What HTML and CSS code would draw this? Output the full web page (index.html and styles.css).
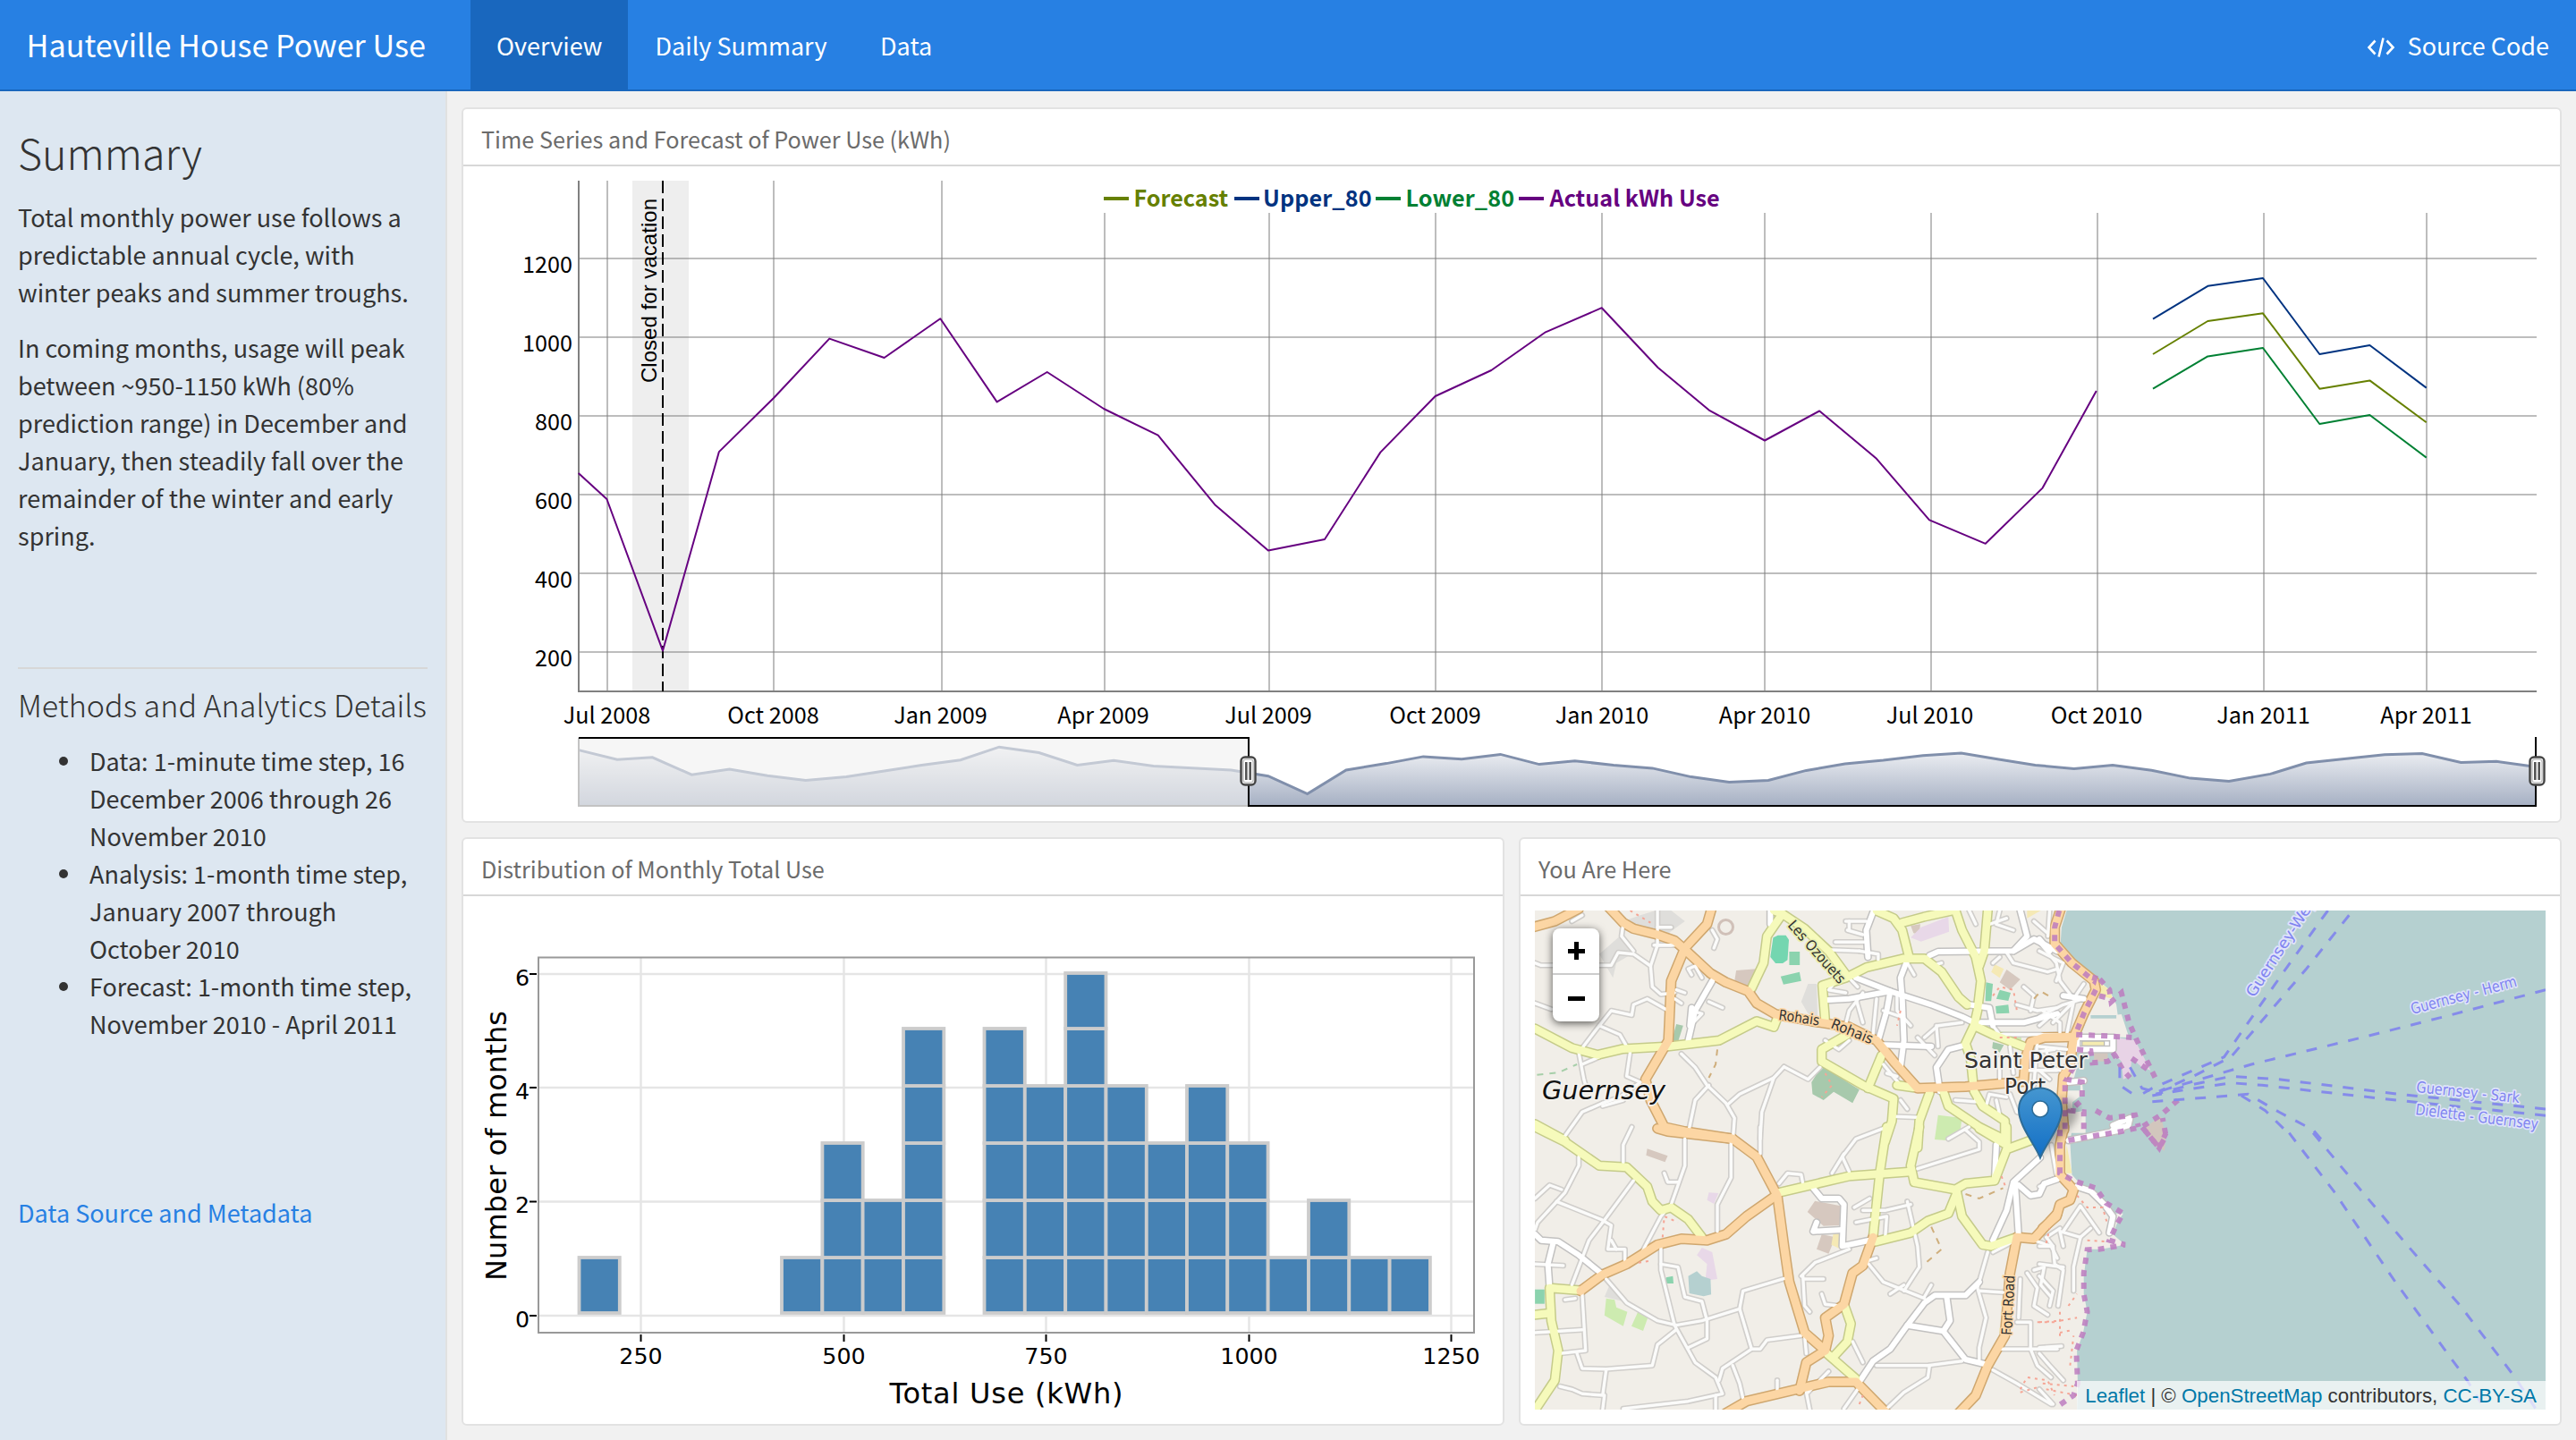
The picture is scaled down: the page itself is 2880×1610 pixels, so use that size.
FILE: index.html
```html
<!DOCTYPE html>
<html lang="en">
<head>
<meta charset="utf-8">
<title>Hauteville House Power Use</title>
<link rel="stylesheet" href="styles.css">
</head>
<body>
<header class="navbar">
  <div class="brand">Hauteville House Power Use</div>
  <nav class="tabs">
    <a class="tab active">Overview</a>
    <a class="tab">Daily Summary</a>
    <a class="tab">Data</a>
  </nav>
  <a class="source">
    <svg width="32" height="24" viewBox="0 0 32 24" fill="none" stroke="#fff" stroke-width="2.6"><path d="M9.5 4.5 2.5 12l7 7.5M22.5 4.5l7 7.5-7 7.5M18.5 1.5l-5 21"/></svg>
    <span>Source Code</span>
  </a>
</header>
<main class="page">
  <aside class="sidebar">
    <h2>Summary</h2>
    <p>Total monthly power use follows a<br>predictable annual cycle, with<br>winter peaks and summer troughs.</p>
    <p>In coming months, usage will peak<br>between ~950-1150 kWh (80%<br>prediction range) in December and<br>January, then steadily fall over the<br>remainder of the winter and early<br>spring.</p>
    <hr>
    <h3>Methods and Analytics Details</h3>
    <ul>
      <li>Data: 1-minute time step, 16<br>December 2006 through 26<br>November 2010</li>
      <li>Analysis: 1-month time step,<br>January 2007 through<br>October 2010</li>
      <li>Forecast: 1-month time step,<br>November 2010 - April 2011</li>
    </ul>
    <a class="meta">Data Source and Metadata</a>
  </aside>
  <section class="content">
    <article class="panel wide">
      <h4>Time Series and Forecast of Power Use (kWh)</h4>
      <svg class="plot" viewBox="518 186 2344 732">
        <defs>
          <linearGradient id="area" x1="0" y1="824" x2="0" y2="900" gradientUnits="userSpaceOnUse"><stop offset="0" stop-color="#fff"/><stop offset="1" stop-color="#a7b1c4"/></linearGradient>
          <g id="grip">
            <rect x="-8" y="-15.5" width="16" height="31" rx="4.5" fill="#fff" stroke="#444" stroke-width="2.4"/>
            <rect x="-5.6" y="-13" width="11.2" height="26" rx="3" fill="none" stroke="#c4c4c4" stroke-width="1.6"/>
            <path d="M-2.2-10v20M2.2-10v20" stroke="#555" stroke-width="2.6"/>
          </g>
        </defs>
        <rect x="707" y="202" width="63" height="571" fill="#eee"/>
        <path class="grid" d="M647 289H2836M647 377H2836M647 465H2836M647 553H2836M647 641H2836M647 729H2836"/>
        <path class="grid" d="M679 202V773M865 202V773M1053 202V773M1235 238V773M1419 238V773M1605 238V773M1791 238V773M1973 238V773M2159 238V773M2345 238V773M2531 238V773M2713 238V773"/>
        <path d="M647 202V773H2836" fill="none" stroke="#808080" stroke-width="2"/>
        <path d="M741 202V773" stroke="#000" stroke-width="2" stroke-dasharray="14 6"/>
        <g class="series">
          <polyline stroke="#660080" points="646.7,528.9 678.4,558 741,727.6 803.9,505.1 865,445 927.3,378.6 988.6,400 1051.3,356.3 1114.6,449.4 1170.7,416 1234,457 1294.7,486.7 1358.2,564.2 1417.9,615.6 1481,603 1543.4,505.6 1604.6,443 1667.3,414 1728,371.3 1790.8,344.2 1853.6,411 1910.7,458.6 1973,492.5 2034.2,459.5 2097.3,512.2 2157,581.4 2219.8,607.8 2283.6,545.6 2343.8,437.1"/>
          <polyline stroke="#003380" points="2407,356.7 2468.3,319.8 2530,311 2593.3,396 2649.4,386 2712.7,433.6"/>
          <polyline stroke="#668000" points="2407,396 2468.3,359 2530,350.3 2593.3,434.7 2649.4,425.4 2712.7,472.3"/>
          <polyline stroke="#008033" points="2407,434.7 2468.3,398.4 2530,389 2593.3,474 2649.4,464 2712.7,511.6"/>
        </g>
        <text class="note" transform="translate(733.5 428) rotate(-90)" textLength="206">Closed for vacation</text>
        <g class="legend">
          <g fill="#668000"><rect x="1234" y="220" width="28" height="4"/><text x="1267.500" y="230.500">Forecast</text></g>
          <g fill="#003380"><rect x="1380" y="220" width="28" height="4"/><text x="1412" y="230.500" textLength="121.500">Upper_80</text></g>
          <g fill="#008033"><rect x="1538" y="220" width="28" height="4"/><text x="1571.500" y="230.500" textLength="121.500">Lower_80</text></g>
          <g fill="#660080"><rect x="1698" y="220" width="28" height="4"/><text x="1732.500" y="230.500">Actual kWh Use</text></g>
        </g>
        <g class="axis end">
          <text x="640" y="304.500">1200</text><text x="640" y="392.500">1000</text><text x="640" y="480.500">800</text><text x="640" y="568.500">600</text><text x="640" y="656.500">400</text><text x="640" y="744.500">200</text>
        </g>
        <g class="axis mid">
          <text x="678.500" y="808.500">Jul 2008</text><text x="864.500" y="808.500">Oct 2008</text><text x="1051.500" y="808.500">Jan 2009</text><text x="1233.500" y="808.500">Apr 2009</text><text x="1418" y="808.500">Jul 2009</text><text x="1604.500" y="808.500">Oct 2009</text><text x="1791" y="808.500">Jan 2010</text><text x="1973" y="808.500">Apr 2010</text><text x="2157.500" y="808.500">Jul 2010</text><text x="2344" y="808.500">Oct 2010</text><text x="2530.500" y="808.500">Jan 2011</text><text x="2712.500" y="808.500">Apr 2011</text>
        </g>
        <path d="M647 838.600L690 849.200 729.400 846.800 773.300 866.200 815.600 859.900 858 867.200 900.800 872.500 946.200 868.600 988.600 861.900 1030.400 855.500 1073.800 849.700 1117.100 835.200 1161.500 841.500 1204.400 855.500 1245.200 850.200 1289.600 856.500 1376.500 860.900 1417.900 867.700 1461.700 887.500 1505 860.900 1550 853.600 1591.300 845.900 1634.200 848.800 1677.500 843.400 1720.900 854.600 1760.700 850.700 1804 855.500 1847.400 858.900 1890.800 868.600 1933.200 874.400 1977 872.500 2019.400 861.400 2062.700 854.100 2105.500 850.100 2149.900 844.800 2192.700 841.900 2234.600 848.900 2275.400 855.400 2318.800 859.500 2362 855.400 2405.500 861.300 2448.900 870.100 2492 873.600 2538.200 865.400 2578.500 853 2620.800 848.400 2666 843.700 2708 842.500 2751.400 852.500 2791 851.300 2834 857.200V900H647Z" fill="url(#area)"/>
        <path d="M647 838.600L690 849.200 729.400 846.800 773.300 866.200 815.600 859.900 858 867.200 900.800 872.500 946.200 868.600 988.600 861.900 1030.400 855.500 1073.800 849.700 1117.100 835.200 1161.500 841.500 1204.400 855.500 1245.200 850.200 1289.600 856.500 1376.500 860.900 1417.900 867.700 1461.700 887.500 1505 860.900 1550 853.600 1591.300 845.900 1634.200 848.800 1677.500 843.400 1720.900 854.600 1760.700 850.700 1804 855.500 1847.400 858.900 1890.800 868.600 1933.200 874.400 1977 872.500 2019.400 861.400 2062.700 854.100 2105.500 850.100 2149.900 844.800 2192.700 841.900 2234.600 848.900 2275.400 855.400 2318.800 859.500 2362 855.400 2405.500 861.300 2448.900 870.100 2492 873.600 2538.200 865.400 2578.500 853 2620.800 848.400 2666 843.700 2708 842.500 2751.400 852.500 2791 851.300 2834 857.200" fill="none" stroke="#808fab" stroke-width="3"/>
        <path d="M647 825V901H1396" fill="none" stroke="#808080" stroke-width="2"/>
        <rect x="646" y="824" width="750" height="78" fill="#f0f0f0" fill-opacity=".6"/>
        <path d="M647 825H1396V901H2835V824" fill="none" stroke="#000" stroke-width="2"/>
        <use href="#grip" x="1395.500" y="862"/><use href="#grip" x="2836.500" y="862"/>
      </svg>
    </article>
    <article class="panel">
      <h4>Distribution of Monthly Total Use</h4>
      <svg class="plot" viewBox="518 1002 1162 590">
        <path d="M716.500 1070V1490M943.500 1070V1490M1169.500 1070V1490M1396.500 1070V1490M1622.500 1070V1490M602 1089H1648M602 1216H1648M602 1343.500H1648M602 1471H1648" stroke="#e5e5e5" stroke-width="2.400"/>
        <g id="bars" fill="#4682b4" stroke="#ccc" stroke-width="3.800"></g>
        <rect x="602" y="1070.500" width="1046" height="419.500" fill="none" stroke="#999" stroke-width="2"/>
        <path d="M716.500 1492v8M943.500 1492v8M1169.500 1492v8M1396.500 1492v8M1622.500 1492v8M592 1089h8M592 1216h8M592 1343.500h8M592 1471h8" stroke="#000" stroke-width="2"/>
        <g class="dv mid"><text x="716.500" y="1525">250</text><text x="943.500" y="1525">500</text><text x="1169.500" y="1525">750</text><text x="1396.500" y="1525">1000</text><text x="1622.500" y="1525">1250</text></g>
        <g class="dv end"><text x="592" y="1102">6</text><text x="592" y="1229">4</text><text x="592" y="1356">2</text><text x="592" y="1484">0</text></g>
        <text class="dvt" x="994.500" y="1569" textLength="261">Total Use (kWh)</text>
        <text class="dvt" transform="translate(566 1432) rotate(-90)" textLength="302">Number of months</text>
      </svg>
    </article>
    <article class="panel">
      <h4>You Are Here</h4>
      <div class="map">
        <svg viewBox="1716 1018 1130 558">
          <defs>
            <linearGradient id="pin" x1="0" y1="0" x2="0" y2="1"><stop offset="0" stop-color="#4596d0"/><stop offset="1" stop-color="#126fc6"/></linearGradient>
            <filter id="soft"><feGaussianBlur stdDeviation="4"/></filter>
          </defs>
          <g id="tiles"></g>
          <g class="halo">
            <g fill="#333" stroke="#e9eeb0"><text transform="translate(1998 1035) rotate(48.500)" textLength="88" lengthAdjust="spacingAndGlyphs" font-size="16">Les Ozouets</text></g>
            <g fill="#333" stroke="#fcd6a4"><text transform="translate(1988 1140) rotate(8)" textLength="46" lengthAdjust="spacingAndGlyphs" font-size="16">Rohais</text><text transform="translate(2046 1149) rotate(22)" textLength="49" lengthAdjust="spacingAndGlyphs" font-size="16">Rohais</text><text transform="translate(2249 1493) rotate(-87)" textLength="67" lengthAdjust="spacingAndGlyphs" font-size="16">Fort Road</text></g>
            <g fill="#333" stroke="#f4f2ee"><text x="2196" y="1193.500" textLength="138" lengthAdjust="spacingAndGlyphs" font-size="25">Saint Peter</text><text x="2241" y="1223" textLength="46" lengthAdjust="spacingAndGlyphs" font-size="25">Port</text><text x="1724" y="1229" textLength="138" lengthAdjust="spacingAndGlyphs" font-size="28" font-style="italic" fill="#111">Guernsey</text></g>
            <g fill="#8084f0" stroke="#dfe3fa"><text transform="translate(2520 1116) rotate(-57)" textLength="146" lengthAdjust="spacingAndGlyphs" font-size="17">Guernsey-Weym</text><text transform="translate(2697 1134) rotate(-15)" textLength="122" lengthAdjust="spacingAndGlyphs" font-size="17">Guernsey - Herm</text><text transform="translate(2701 1221) rotate(6)" textLength="116" lengthAdjust="spacingAndGlyphs" font-size="17">Guernsey - Sark</text><text transform="translate(2700 1246) rotate(7)" textLength="138" lengthAdjust="spacingAndGlyphs" font-size="17">Dielette - Guernsey</text></g>
          </g>
          <path d="M2282 1292l34-33q14-16 2-27-14-10-28 8z" fill="#000" opacity=".3" filter="url(#soft)"/>
          <path d="M2281 1294.500C2275 1279 2257 1259 2257 1240.500A24 24 0 0 1 2305 1240.500C2305 1259 2287 1279 2281 1294.500Z" fill="url(#pin)" stroke="#2e6c97" stroke-width="2"/>
          <circle cx="2281" cy="1240" r="9" fill="#fff" stroke="#2e6c97" stroke-width="1.500"/>
        </svg>
        <div class="zoom"><span class="plus"></span><span class="minus"></span></div>
        <div class="credit"><a>Leaflet</a> | © <a>OpenStreetMap</a> contributors, <a>CC-BY-SA</a></div>
      </div>
    </article>
  </section>
</main>
<script src="charts.js"></script>
</body>
</html>
```
FILE: charts.js
```js
// Histogram: number of months in each 50 kWh bin
const bins = {200:1,450:1,500:3,550:2,600:5,700:5,750:4,800:6,850:4,900:3,950:4,1000:3,1050:1,1100:2,1150:1,1200:1};
const level = [1468, 1406, 1342, 1278, 1214, 1150, 1088];
let bars = '';
for (const v in bins) {
  const x = 942 + (v - 25 - 500) * 0.906;
  for (let i = 0; i < bins[v]; i++)
    bars += `<rect x="${x.toFixed(1)}" y="${level[i + 1]}" width="45.3" height="${level[i] - level[i + 1]}"/>`;
}
document.getElementById('bars').innerHTML = bars;

// Map tiles: A north-west, B south-west, C north-east, D south-east
const tile = { A: [1700, 930], B: [1700, 1260], C: [2280, 930], D: [2280, 1260] };
const convert = (t, pts) => pts.trim().split(/\s+/).map(p => {
  const [x, y] = p.split(',').map(Number);
  return (tile[t][0] + x / 2.6133).toFixed(1) + ',' + (tile[t][1] + y / 3).toFixed(1);
}).join(' ');
const parts = src => src.trim().split('\n').flatMap(l => {
  l = l.trim(); const t = l[0];
  return l.slice(1).split(';').filter(s => s.trim()).map(s => convert(t, s));
});

const coast = convert('C', '80,264 65,320 62,375 100,440 165,490 205,530 225,580 232,640 115,650 108,690 110,790 98,840 95,1000')
  + ' ' + convert('D', '90,50 95,160 130,205 180,240 220,290 245,290 228,320 215,360 250,395 180,410 140,410 130,500 130,560 140,620 128,690 110,750 112,860 110,960 1500,960')
  + ' ' + convert('C', '1500,250');

const areas = [
  ['#dfdedb', 'A 395,264 440,264 480,300 420,350 320,330 300,300 350,280;A 230,410 290,350 340,400 280,440 270,490'],
  ['#dfdedb', 'A 840,510 865,510 868,620 840,610 820,570;B 260,530 320,590 245,570'],
  ['#74d6b0', 'A 738,355 752,347 775,347 784,362 780,430 766,441 745,441 730,420'],
  ['#8bd3ae', 'A 785,402 816,402 816,447 785,447;A 760,485 815,470 820,500 768,512;A 1400,530 1432,540 1425,567 1390,560;A 1388,585 1425,580 1428,608 1390,610;A 1360,505 1380,510 1375,568 1358,568;B 42,545 70,545 70,593 42,593;B 425,505 445,500 447,525 422,525'],
  ['#a7c9ac', 'A 880,785 990,865 970,910 915,872 885,900 853,880 850,840;A 455,645 475,650 460,705 442,700;A 1380,705 1412,715 1400,740 1378,725'],
  ['#cdebb0', 'A 1220,950 1290,960 1285,1000 1245,1035 1210,1032;B 250,575 275,580 280,605 312,620 300,668 245,632;B 345,615 372,640 358,684 324,668;A 1400,670 1465,672 1462,705'],
  ['#d6c8bf', 'A 630,465 690,460 670,520 625,500;A 1420,462 1460,495 1430,530 1400,505;B 370,73 430,97 422,118 367,95;B 860,248 935,265 932,330 885,332 838,285;B 880,360 920,370 900,425 865,410;A 1140,315 1168,310 1165,345 1148,340'],
  ['#e8d8e8', 'A 1170,320 1250,285 1252,335 1170,368 1140,355;B 530,405 560,420 575,510 540,515 545,460 515,430;B 550,220 578,222 565,258 545,245'],
  ['#f5e9b5', 'A 1385,445 1412,460 1400,490 1375,470;B 915,350 935,360 932,408 908,395;A 1480,264 1520,264 1480,290'],
  ['#b5d0d0', 'B 490,500 515,484 530,500 555,510 557,562 535,568 493,558']
].map(([c, s]) => s.split(';').map(p => `<polygon fill="${c}" points="${convert(p[0], p.slice(1))}"/>`).join('')).join('');

// Piers and harbour walls that stand in the sea
const piers = [
  ['#f1eee8', '', 'C 165,550 215,590 220,612 150,612;C 140,625 240,612 262,690 120,685;C 70,820 125,830 128,880 70,930;C 80,945 135,935 135,1010 85,1010'],
  ['#b5d0d0', '', 'C 150,615 225,615 225,626 150,626;C 80,850 120,850 120,868 80,868'],
  ['#f5ebb0', '', 'C 165,495 205,530 215,560 175,550;D 80,60 95,155 70,155'],
  ['#fff', '#aaa', 'C 115,690 215,690 215,730 115,730'],
  ['#f5ebb0', '#aaa', 'C 125,702 190,702 190,718 125,718'],
  ['#e8d3e6', '', 'C 225,690 280,700 325,800 300,790 270,760 265,820 245,830 240,770 215,740'],
  ['#d2c6bd', '', 'C 310,990 355,955 370,1020 365,1070 335,1050'],
  ['#d2c6bd', '', 'C 160,735 200,735 200,770 160,770']
].map(([c, s, d]) => d.split(';').map(p => `<polygon fill="${c}" ${s && `stroke="${s}"`} points="${convert(p[0], p.slice(1))}"/>`).join('')).join('');
const ring = `<circle cx="1929.500" cy="1036.500" r="8" fill="none" stroke="#d0c0b8" stroke-width="3"/>`;

const roads = {
  minor: parts(`
A 400,264 400,380 450,380;400,380 380,450 385,520 410,545 450,540;300,310 295,350 330,400;42,440 60,448 265,448 285,405 330,410 380,450;440,605 370,560 330,580 325,615 265,600 230,650 170,740 185,830 190,850
A 230,650 290,680 320,740 310,820 350,840;42,575 90,595;180,780 230,755;390,380 440,380;400,320 440,320;150,300 180,280
A 470,745 510,790 545,850 600,910 625,960 620,1040;550,850 510,900 490,1010;770,788 740,825 705,940 700,1030;770,788 840,830 875,790;740,825 640,880 605,915
A 240,910 180,940 130,1020;240,910 290,890 350,840;300,900 240,920;560,330 575,360 565,390;550,570 590,590;500,480 490,460 510,450 530,490
A 455,530 480,540;450,560 470,575;500,600 530,610 505,640;950,300 1010,300;955,330 1000,345;920,370 1010,370;890,395 990,400;990,400 1045,410 1045,430
A 930,490 900,530 950,540;960,490 985,520;1000,540 960,600 940,690;980,560 1000,640;1100,550 1100,600 1140,650;1060,600 1110,620;1040,560 1030,680
A 1200,450 1230,440;1150,480 1130,440;1310,262 1330,310;1400,264 1390,310 1440,330;1370,310 1420,290;1500,300 1540,340;1380,440 1400,420;1420,405 1440,440 1540,470 1568,460
A 1180,690 1220,650 1290,640;1215,650 1220,720;1160,690 1210,750;1380,650 1400,680 1568,680;1470,520 1500,550 1490,600;1450,580 1510,600 1568,590
A 1270,900 1330,905 1330,880;1090,955 1160,958;1110,900 1130,930;1060,780 1110,850;1070,810 1100,820;1360,920 1370,880 1420,890;1430,880 1450,940 1500,960
A 1390,900 1400,950;1400,760 1400,830;1430,720 1440,810;1500,740 1560,730;1480,800 1568,800;1510,700 1500,850;890,700 930,730 960,700;960,300 960,330
B 170,100 170,130 130,220 50,320 42,345;330,180 240,320 200,380 150,530;105,250 235,310 265,330 255,410 305,410 305,455;42,240 85,195 120,210
B 325,0 300,60 300,120;480,40 480,130 440,260 410,300 355,420;615,50 615,170 575,260 575,350;700,0 700,90;420,155 430,185 460,185
B 250,510 310,590 400,650 455,665 530,650 640,610 650,550 780,505;410,400 410,480 450,665 510,790 570,840 590,895 490,920 300,945;410,460 460,470 480,570 530,585 545,650 545,710 490,740
B 455,680 400,730 385,800 250,812 180,810 165,760;115,760 190,750 180,560;640,610 675,745 700,745 720,715 820,700;675,745 590,810 580,850;620,800 640,860 650,910
B 115,870 150,880 180,895 240,900 250,815;245,900 240,948;42,690 180,680;820,500 860,455 960,410;830,510 885,510;825,500 830,600 845,620;1010,450 1060,520 1180,575
B 1130,250 1160,400 1165,470 1120,550;1000,280 1065,280 1140,260;980,320 1070,300 1065,380;960,150 940,100 980,40 1060,5;910,155 945,90;1160,140 1340,75 1340,50 1300,10
B 755,190 780,155 820,160 825,190;970,720 1000,790;1040,800 1190,800 1290,785;1195,800 1190,840 1120,890 1070,945;1365,420 1335,540 1360,640 1340,740 1340,790
B 1340,550 1410,555;1400,745 1568,745;1490,745 1490,655 1450,655;1460,510 1455,640;1380,815 1450,860 1550,930;1490,745 1510,800 1550,840;1480,490 1510,540 1500,600 1540,630
B 835,890 845,948;985,880 945,945;750,850 750,890;880,560 890,595 930,600;1080,560 1120,530;1180,570 1200,530;42,460 125,465;130,580 160,575;1010,450 1040,440;975,270 1020,240
B 840,890 900,820;1250,40 1310,0;570,900 570,948;280,410 265,380;830,700 835,760;1380,420 1430,390;1500,380 1550,400 1568,440;1500,480 1530,470 1520,530 1550,570
D 0,200 30,180 55,170;70,350 120,265 175,355;120,370 60,350 70,400;40,400 20,370 60,340;0,400 40,400 45,460 70,480 55,600;120,370 100,470 100,550;0,460 70,470;0,500 40,550 30,600;0,740 65,735;0,760 30,800 70,850;150,340 120,370;0,880 40,930;35,60 50,160
C 0,370 50,440 60,500 100,560 130,510;0,400 70,440 50,500;0,620 70,580 130,560;40,640 100,570 80,680;30,264 25,350;0,650 30,620;10,600 60,640 60,680;0,720 80,730;20,730 30,790 60,800;0,800 30,830;20,1000 40,900`),
  white: parts(`
A 890,565 960,560 1080,535 1200,580 1290,620 1325,640;1195,415 1220,402 1440,400 1500,360 1568,400;560,500 510,600 490,700;980,490 1080,535 1070,600 1045,700;1440,400 1480,350 1460,264
A 1345,640 1470,640 1568,610;1130,430 1110,490 1115,560 1120,700 1110,790;1060,715 1200,720;1225,870 1215,790 1250,730 1300,715;1380,650 1370,590 1310,580;1015,420 1010,330 1030,270;730,264 730,310;500,590 495,650
B 42,360 60,380 110,385 170,430 240,495;95,390 80,460 85,540;990,855 1030,785 1080,745 1130,665 1180,590 1210,565 1300,565 1340,520;1130,665 1235,685 1300,780 1355,795;1245,570 1255,650 1235,685
B 855,205 880,240 930,240 945,260 940,400 1020,380;865,320 855,350 940,345;1518,103 1440,185 1420,280 1380,380;1445,185 1455,365;1455,195 1490,230 1516,225 1530,190 1568,175;1390,60 1385,180
C 0,360 30,400;110,690 110,730 215,730 215,690 110,690;70,550 130,560;215,985 265,960 260,985 215,1000;85,840 130,835
D 85,45 240,10;110,200 150,215 190,260 215,300 205,355`),
  yellow: parts(`
A 42,660 150,725 225,748 300,728 430,720 580,700 690,635 740,655 750,625;740,264 765,275 720,350 710,440 675,525;765,275 830,325 900,400 950,478;890,635 882,515 950,490 1010,455 1120,425 1180,425 1230,470 1280,555 1305,580
A 1040,265 1090,290 1115,330 1135,420;1115,305 1180,285 1270,262 1290,330 1330,420 1345,500 1335,600 1325,650 1300,710 1315,760 1325,870 1350,920 1415,970 1415,1040;1365,264 1355,400 1340,450;1325,650 1380,680 1470,720
A 955,680 880,730 880,770 1000,850 1090,895 1085,970 1065,1040;1055,750 1015,860;1195,875 1165,970 1160,1060;1235,870 1250,920 1340,990 1410,1030;42,980 130,1035;1100,850 1150,858
B 42,0 130,50 230,130 310,135 370,200 385,250 410,280 440,270 490,310 530,370;755,220 960,165 1140,150;1070,0 1050,150 1030,370;1165,0 1140,130 1150,185 1270,210 1300,190 1385,180 1420,75 1490,45 1520,35
B 1340,5 1420,60 1420,0;1035,385 1140,355 1190,315 1250,290 1275,220;1275,220 1290,300 1350,395 1375,400 1450,370;42,630 85,625;175,548 85,540 90,650 110,750 100,850 45,945;945,595 965,660 955,720 915,770;895,760 980,845`),
  orange: parts(`
A 30,322 100,300 170,258;255,250 300,305 330,325 400,345 450,365 480,395 555,475 600,505 665,535 690,575 745,612 850,635 960,655 1040,700 1090,770 1160,860 1300,855 1470,838 1475,760 1490,705 1530,690 1620,688
A 560,250 545,310 480,390 440,500 432,700 365,830 380,900 420,990 480,1005 620,1030
B 400,5 430,15 620,40 690,100 750,230 770,400 785,520 830,690 890,750 835,790 815,885;175,550 240,495 310,460 400,395 470,375 545,380 600,360 660,300 740,235
B 1030,370 1000,465 970,490 945,595 890,640 900,700 890,750;600,960 660,920 900,855 980,855 1070,960;1568,290 1500,375 1450,370 1430,490 1415,700 1365,800 1330,900 1280,960
C 65,250 45,320 45,375 95,440 160,500 165,530 130,610 100,690 90,780 70,820 65,900 72,1000
D 72,0 60,60 60,160 100,210 90,245 60,260 50,300 10,340`)
};
const style = { minor: ['#d0cecb', 6.6, '#fbfbfa', 3.4], white: ['#c2c1c0', 9, '#fff', 6], yellow: ['#c5cb8a', 11.5, '#f6fabb', 8.5], orange: ['#cfa76f', 12, '#fcd6a4', 9] };
const stroke = (list, c, w) => list.map(p => `<polyline points="${p}" stroke="${c}" stroke-width="${w}"/>`).join('');
const kinds = Object.keys(roads);
const casing = kinds.map(k => stroke(roads[k], style[k][0], style[k][1])).join('');
const fill = kinds.map(k => stroke(roads[k], style[k][2], style[k][3])).join('');

// Protected shore outline, footpaths and ferry lines
const shore = parts(`
C 58,264 45,320 45,375 95,440 160,500 165,480 205,530 210,570 240,540 262,640 285,700 345,840;175,550 210,560;165,530 130,610 105,680 200,685 270,690;110,730 150,735 155,775 200,770 230,750;215,740 245,800 265,825;270,760 320,800
C 100,790 80,830 125,840 125,900 90,935 130,940 130,1000;405,900 355,950 300,990 350,1060 370,1020 360,960;165,935 205,960 280,950 290,990;75,850 75,1000
D 85,45 160,30 240,15 300,0 350,70 370,20;60,10 60,155 100,180 165,205 195,255 245,290 225,330 205,380 250,395 175,410 140,412 130,490 130,560 140,620 128,690 108,750 112,860 100,900 50,940`);
const paths = parts(`
A 320,264 380,305;1380,550 1400,520 1440,530 1450,600;1400,690 1460,690;890,810 910,850 880,890;1110,600 1100,650
B 415,370 420,300 460,320;1405,165 1420,210;1460,880 1480,840 1540,850 1560,900;1460,890 1520,870;1510,655 1568,655;345,455 375,450;990,930 1000,900
D 110,230 140,270 185,270 200,330;140,380 200,385;20,390 30,340;0,655 60,650 110,640;60,690 100,680;85,600 110,560;90,800 100,700;10,860 100,870;20,880 110,900;60,620 60,710`);
const tracks = parts(`
A 575,730 570,780 550,825;1500,560 1520,535 1550,555
B 1300,225 1340,240 1410,205;1200,335 1230,410 1175,465`);
const woods = parts(`
A 48,815 110,808 165,780`);
const ferry = parts(`
C 843,264 720,460 540,755 420,815 330,860 300,880;905,280 780,460 560,755 450,820 350,870;1479,530 1200,615 960,685 620,780 380,860 330,880;1479,930 1050,880 700,830 560,820 440,850 340,880
C 1479,952 1000,895 650,850 560,842 400,870 330,885;330,905 560,885 610,880 700,940 800,1000 830,1040;590,885 660,935 735,1020;235,790 235,850 280,885;265,790 300,860 330,870
D 800,20 905,165 1070,390 1230,600 1390,840 1450,945;730,20 860,215 1040,520 1250,850 1290,925`);

document.getElementById('tiles').innerHTML =
  `<rect x="1716" y="1018" width="1130" height="558" fill="#f1eee8"/>${areas}${ring}<polygon points="${coast}" fill="#b5d0d0"/>${piers}
  <g fill="none" stroke-linejoin="round" stroke-linecap="round">${casing}${fill}</g>
  <g fill="none" stroke-dasharray="3 5">${stroke(paths, '#f5a595', 2)}</g>
  <g fill="none" stroke-dasharray="7 7">${stroke(tracks, '#cfae7c', 2)}${stroke(woods, '#a7cfa9', 2)}</g>
  <g fill="none" stroke-dasharray="7 7" opacity=".85">${stroke(shore, '#bd7cc0', 6)}</g>
  <g fill="none" stroke-dasharray="12 12">${stroke(ferry, '#858bea', 3)}</g>`;
```
FILE: styles.css
```css
* { box-sizing: border-box; }
body { margin: 0; width: 2880px; height: 1610px; overflow: hidden; background: #f1f1f1; color: #333; font: 400 27px/42px "Noto Sans CJK SC", "Noto Sans", sans-serif; display: flex; flex-direction: column; }
.navbar { height: 102px; background: #2780e3; border-bottom: 2px solid #1967be; color: #fff; display: flex; line-height: 101px; flex: none; }
.brand { width: 526px; padding-left: 29.5px; font-size: 34.2px; line-height: 99px; white-space: nowrap; }
.tabs { display: flex; flex: 1; }
.tab { padding: 0 29.6px 0 30px; }
.active { background: #1967be; padding: 0 29px; }
.source { display: flex; align-items: center; gap: 14px; padding-right: 30px; }
.source svg { margin-top: 5px; }
.page { display: flex; flex: 1; min-height: 0; }
.sidebar { width: 500px; background: #dde7f1; border-right: 2px solid #e1e1e1; padding: 43px 20px 0; white-space: nowrap; }
h2 { margin: 0 0 27px; font-weight: 300; font-size: 46.7px; line-height: 50px; }
p { margin: 0 0 20px; }
hr { margin: 126px 0 20px; height: 2px; border: 0; background: #d7d7d7; }
h3 { margin: 0 0 24px; font-weight: 300; font-size: 34.1px; line-height: 38px; }
ul { margin: 0 0 169px; padding: 0 0 0 80px; list-style: none; }
li::before { content: ""; float: left; width: 10px; height: 10px; border-radius: 50%; background: #333; margin: 16px 0 0 -34px; }
.meta { color: #2780e3; display: block; }
.content { flex: 1; display: grid; grid-template-columns: 1166px 1166px; grid-template-rows: 800px 658px; gap: 16px; padding: 18px 16px 16px; }
.panel { background: #fff; border: 2px solid #e2e2e2; border-radius: 6px; display: flex; flex-direction: column; min-height: 0; }
.wide { grid-column: 1 / 3; }
h4 { margin: 0; height: 64px; padding: 2px 20px 0; border-bottom: 2px solid #d7d7d7; font-weight: 400; font-size: 25.2px; line-height: 62px; color: #6b6b6b; flex: none; }
.plot { display: block; flex: 1; min-height: 0; width: 100%; }
.grid { stroke: #808080; stroke-opacity: .52; stroke-width: 2; fill: none; }
.series { fill: none; stroke-width: 2; stroke-linejoin: round; }
.note { font: 24px "Liberation Sans", sans-serif; }
.axis { font-size: 25.2px; fill: #000; }
.legend { font-size: 25.2px; font-weight: 700; }
.mid { text-anchor: middle; }
.end { text-anchor: end; }
.dv { font: 25.3px "DejaVu Sans", sans-serif; }
.dvt { font: 32px "DejaVu Sans", sans-serif; }
.map { margin: 16px; flex: 1; min-height: 0; position: relative; overflow: hidden; }
.map > svg { display: block; width: 1130px; height: 558px; }
.halo { font-family: "DejaVu Sans", sans-serif; stroke-width: 3.5px; stroke-linejoin: round; }
.halo text { paint-order: stroke; }
.zoom { position: absolute; left: 20px; top: 20px; width: 52px; height: 104px; border-radius: 8px; background: #fff; box-shadow: 0 2px 10px rgba(0, 0, 0, .65); display: grid; grid-template-rows: 52px 52px; }
.zoom span { display: grid; place-items: center; }
.plus { border-bottom: 2px solid #ccc; }
.plus::before, .plus::after, .minus::before { content: ""; grid-area: 1 / 1; width: 19px; height: 5px; background: #000; }
.plus::after { width: 5px; height: 20px; }
.credit { position: absolute; right: 0; bottom: 0; height: 32px; width: 524px; padding: 1px 10px 0 8px; text-align: right; white-space: nowrap; background: rgba(255, 255, 255, .7); font: 22.3px/32px "Liberation Sans", sans-serif; color: #333; }
.credit a { color: #0078a8; }
```
